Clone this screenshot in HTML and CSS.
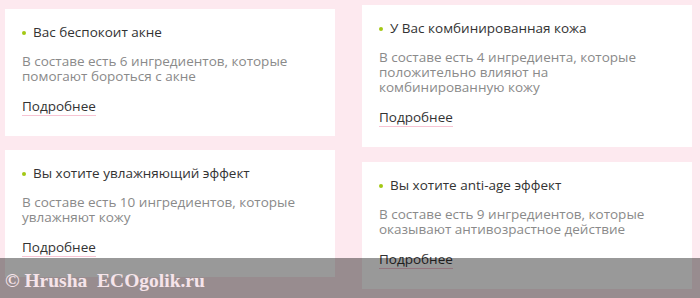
FILE: index.html
```html
<!DOCTYPE html>
<html lang="ru">
<head>
    <meta charset="UTF-8">
    <meta name="viewport" content="width=device-width, initial-scale=1.0">
    <title>Ингредиенты</title>
    <link rel="stylesheet" href="styles.css">
</head>
<body>
    <div class="grid">
        <div class="column column-left">
            <div class="card">
                <h3 class="card-title">Вас беспокоит акне</h3>
                <p class="card-text">В составе есть 6 ингредиентов, которые помогают бороться с акне</p>
                <a class="card-link" href="#">Подробнее</a>
            </div>
            <div class="card">
                <h3 class="card-title">Вы хотите увлажняющий эффект</h3>
                <p class="card-text">В составе есть 10 ингредиентов, которые увлажняют кожу</p>
                <a class="card-link" href="#">Подробнее</a>
            </div>
        </div>
        <div class="column column-right">
            <div class="card">
                <h3 class="card-title">У Вас комбинированная кожа</h3>
                <p class="card-text">В составе есть 4 ингредиента, которые положительно влияют на комбинированную кожу</p>
                <a class="card-link" href="#">Подробнее</a>
            </div>
            <div class="card">
                <h3 class="card-title">Вы хотите anti-age эффект</h3>
                <p class="card-text">В составе есть 9 ингредиентов, которые оказывают антивозрастное действие</p>
                <a class="card-link" href="#">Подробнее</a>
            </div>
        </div>
    </div>

    <div class="watermark">© Hrusha&nbsp; ECOgolik.ru</div>
</body>
</html>
```

FILE: styles.css
```css
body {
    margin: 0;
    padding: 0;
    background-color: #fde9ef;
    font-family: "Open Sans", Arial, sans-serif;
    color: #333;
    height: 298px;
    overflow: hidden;
    position: relative;
}
.grid {
    display: flex;
    gap: 27px;
    padding: 0 8px 0 5px;
}
.column {
    width: 330px;
    display: flex;
    flex-direction: column;
    gap: 14px;
}
.column-left {
    padding-top: 9px;
}
.column-right {
    padding-top: 5px;
    gap: 15px;
}
.card {
    background: #fff;
    padding: 15px 17px 20px;
    display: flex;
    flex-direction: column;
    align-items: flex-start;
}
.card-title {
    margin: 0;
    font-size: 13.5px;
    font-weight: normal;
    line-height: 17px;
    color: #333;
    display: flex;
    align-items: center;
}
.card-title::before {
    content: "";
    width: 4px;
    height: 4px;
    border-radius: 50%;
    background: #a3c814;
    margin: 1px 7px 0 0;
}
.card-text {
    margin: 13px 0 14px;
    font-size: 13.5px;
    line-height: 15px;
    color: #8a8a8a;
    padding-right: 20px;
}
.card-link {
    font-size: 13.5px;
    line-height: 17px;
    color: #333;
    text-decoration: none;
    border-bottom: 1px solid #f7c4d3;
}
.watermark {
    position: absolute;
    left: 0;
    right: 0;
    bottom: 0;
    height: 40px;
    padding-left: 5px;
    background: rgba(0, 0, 0, 0.4);
    color: #f6e4ea;
    font-family: "Liberation Serif", serif;
    font-weight: bold;
    font-size: 19.5px;
    line-height: 40px;
    padding-top: 3px;
    box-sizing: border-box;
}
```
